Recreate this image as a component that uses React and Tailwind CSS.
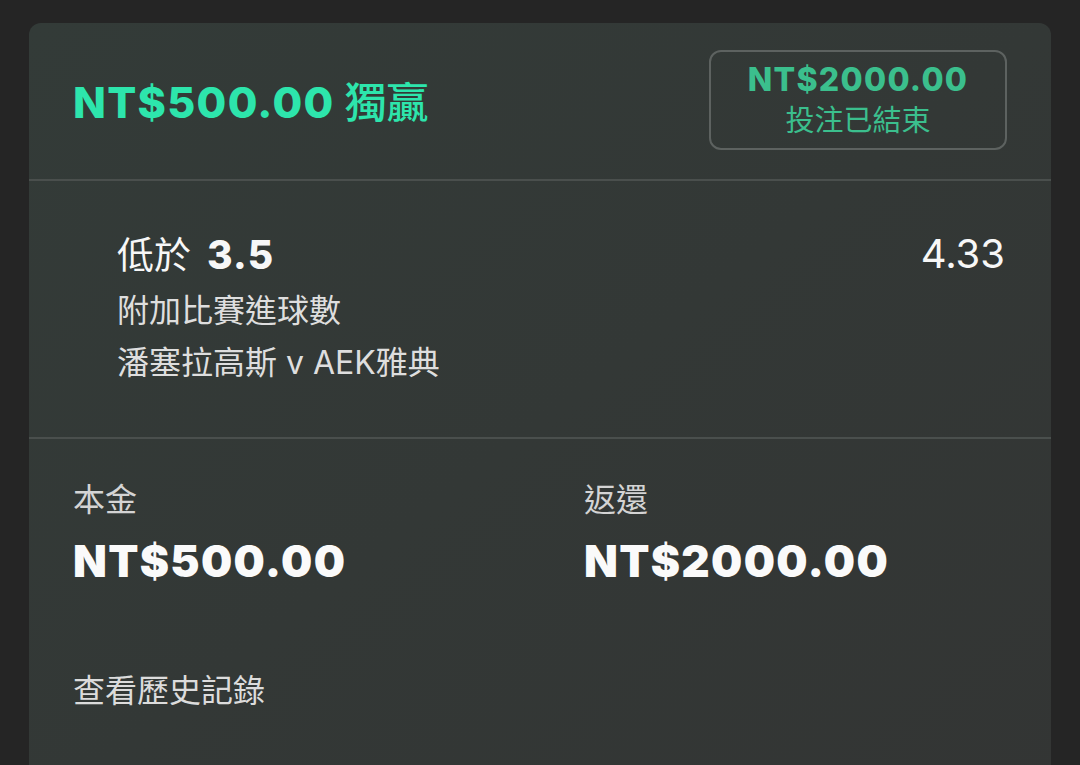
export default function App() {
  const cjk = { fontFamily: 'Inter, "Noto Sans CJK TC", "Noto Sans CJK SC", sans-serif' };
  return (
    <div className="w-[1080px] h-[765px] bg-[#252525] overflow-hidden pt-[23px] px-[29px]" style={cjk}>
      <div className="w-[1022px] h-[800px] rounded-[12px] bg-gradient-to-br from-[#333b38] to-[#333534]">
        {/* Header */}
        <div className="h-[156px] flex items-center justify-between pl-[44px] pr-[44px]">
          <div className="flex items-baseline text-[#2de5ac] mt-[2px]">
            <span className="text-[43px] font-extrabold tracking-[0.03em] leading-none">NT$500.00</span>
            <span className="text-[42px] font-medium leading-none ml-[10px]">獨贏</span>
          </div>
          <div className="w-[298px] h-[100px] mt-[-2px] rounded-[12px] border-2 border-[#5d6260] flex flex-col items-center justify-center text-[#3bbf8d]">
            <span className="text-[32px] font-extrabold tracking-[0.04em] leading-[38px]">NT$2000.00</span>
            <span className="text-[29px] font-normal leading-[36px] mt-[4px]">投注已結束</span>
          </div>
        </div>
        <div className="border-t-2 border-[#4a4f4d]" />
        {/* Selection */}
        <div className="pl-[88px] pr-[46px] pt-[51px] pb-[52px]">
          <div className="flex items-center justify-between h-[44px]">
            <span className="text-[#f7f7f7] leading-none flex items-baseline">
              <span className="text-[37px] font-normal">低於</span>
              <span className="text-[39px] font-extrabold tracking-[0.03em] ml-[16px]">3.5</span>
            </span>
            <span className="text-[40px] text-[#f7f7f7] font-normal leading-none">4.33</span>
          </div>
          <div className="h-[44px] mt-[13px] flex items-center text-[32px] text-[#dedede] leading-none">附加比賽進球數</div>
          <div className="h-[44px] mt-[8px] flex items-center text-[32px] text-[#dedede] leading-none">潘塞拉高斯 v AEK雅典</div>
        </div>
        <div className="border-t-2 border-[#4a4f4d]" />
        {/* Amounts */}
        <div className="pl-[44px] pt-[41px]">
          <div className="flex">
            <div className="w-[511px]">
              <div className="h-[40px] flex items-center text-[32px] text-[#d4d4d4] leading-none">本金</div>
              <div className="h-[50px] mt-[16px] flex items-center text-[44px] font-black tracking-[0.03em] text-[#fafafa] leading-none">NT$500.00</div>
            </div>
            <div>
              <div className="h-[40px] flex items-center text-[32px] text-[#d4d4d4] leading-none">返還</div>
              <div className="h-[50px] mt-[16px] flex items-center text-[44px] font-black tracking-[0.03em] text-[#fafafa] leading-none">NT$2000.00</div>
            </div>
          </div>
          <div className="h-[40px] mt-[85px] flex items-center text-[32px] text-[#dcdcdc] leading-none">查看歷史記錄</div>
        </div>
      </div>
    </div>
  );
}
